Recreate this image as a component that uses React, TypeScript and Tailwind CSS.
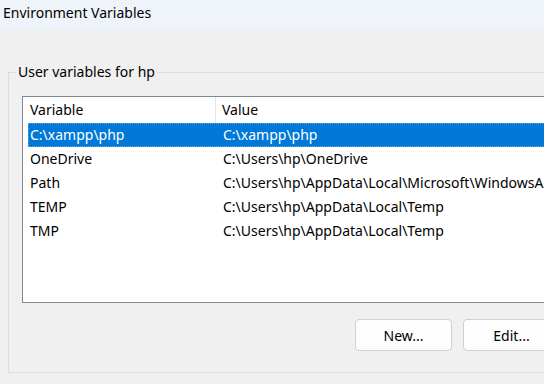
import React from "react";

const rows = [
  { name: "C:\\xampp\\php", value: "C:\\xampp\\php" },
  { name: "OneDrive", value: "C:\\Users\\hp\\OneDrive" },
  { name: "Path", value: "C:\\Users\\hp\\AppData\\Local\\Microsoft\\WindowsApps;" },
  { name: "TEMP", value: "C:\\Users\\hp\\AppData\\Local\\Temp" },
  { name: "TMP", value: "C:\\Users\\hp\\AppData\\Local\\Temp" },
];

export default function App() {
  return (
    <div
      className="w-[544px] h-[384px] overflow-hidden bg-[#f0f0f0] text-black"
      style={{ fontFamily: '"Segoe UI", "Noto Sans", "Open Sans", sans-serif' }}
    >
      <div className="h-[30px] bg-[#eef4f9] pl-[3px] pt-[3px] text-[14px] leading-[20px]">
        Environment Variables
      </div>

      <div className="pl-[8px] pt-[33px]">
        <fieldset className="relative w-[560px] h-[310px] border border-[#dcdcdc]">
          <legend className="ml-[7px] px-[2px] text-[14px] leading-[18px]">
            User variables for hp
          </legend>

          <div className="ml-[13px] mt-[15px] w-[560px] h-[207px] border border-[#828790] bg-white overflow-hidden">
            <div className="flex h-[26px] text-[14px] leading-[26px]">
              <div className="w-[193px] pl-[7px] border-r border-[#e5e5e5]">Variable</div>
              <div className="pl-[6px]">Value</div>
            </div>
            {rows.map((r, i) => (
              <div
                key={r.name + i}
                className={`flex h-[24px] ml-[5px] text-[14px] leading-[22px] whitespace-nowrap ${
                  i === 0 ? "bg-[#0078d7] text-white border border-dotted border-[#6aa8e4]" : "border border-transparent"
                }`}
              >
                <div className="w-[189px] pl-[1px]">{r.name}</div>
                <div className="pl-[5px]">{r.value}</div>
              </div>
            ))}
          </div>

          <div className="flex gap-[11px] ml-[346px] mt-[16px]">
            <button className="w-[97px] h-[32px] rounded-[4px] border border-[#d0d0d0] bg-[#fdfdfd] text-[14px]">
              New...
            </button>
            <button className="w-[97px] h-[32px] rounded-[4px] border border-[#d0d0d0] bg-[#fdfdfd] text-[14px]">
              Edit...
            </button>
          </div>
        </fieldset>
      </div>
    </div>
  );
}
